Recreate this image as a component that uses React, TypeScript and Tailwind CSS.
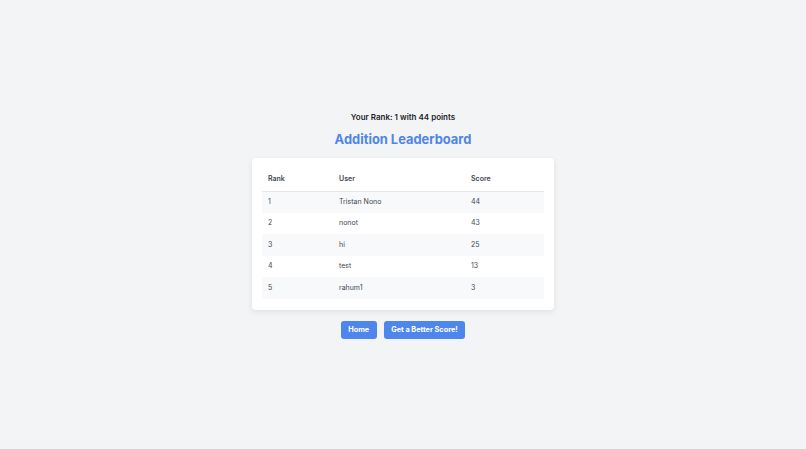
const rows = [
  { rank: 1, user: "Tristan Nono", score: 44 },
  { rank: 2, user: "nonot", score: 43 },
  { rank: 3, user: "hi", score: 25 },
  { rank: 4, user: "test", score: 13 },
  { rank: 5, user: "rahum1", score: 3 },
];

export default function App() {
  return (
    <div
      className="min-h-screen bg-[#f3f4f6] flex flex-col items-center justify-center pt-[1px]"
      style={{ fontFamily: "Inter, 'Noto Sans', sans-serif" }}
    >
      <p className="text-[8px] leading-[13px] font-semibold text-[#1f2328]">Your Rank: 1 with 44 points</p>
      <h1 className="mt-[7px] text-[12.9px] leading-[18px] font-bold text-[#4f86e4]">Addition Leaderboard</h1>

      {/* Leaderboard card */}
      <div className="mt-[9px] w-[302px] bg-white rounded-[4px] shadow-[0_2px_6px_rgba(0,0,0,0.08)] px-[10px] pt-[10px] pb-[11px]">
        <table className="w-full text-left text-[7px] text-[#3f4651] border-collapse">
          <thead>
            <tr className="border-b border-[#e5e7eb]">
              <th className="w-[71px] h-[23px] px-[6px] font-semibold">Rank</th>
              <th className="w-[132px] h-[23px] px-[6px] font-semibold">User</th>
              <th className="h-[23px] px-[6px] font-semibold">Score</th>
            </tr>
          </thead>
          <tbody>
            {rows.map((r, i) => (
              <tr key={r.rank} className={i % 2 === 0 ? "bg-[#f8f9fa]" : "bg-white"}>
                <td className="h-[21.6px] px-[6px]">{r.rank}</td>
                <td className="h-[21.6px] px-[6px]">{r.user}</td>
                <td className="h-[21.6px] px-[6px]">{r.score}</td>
              </tr>
            ))}
          </tbody>
        </table>
      </div>

      <div className="mt-[11px] flex gap-[7px]">
        <button className="h-[18px] px-[7.5px] rounded-[3px] bg-[#4f86ec] text-white text-[7.3px] font-bold">Home</button>
        <button className="h-[18px] px-[7.5px] rounded-[3px] bg-[#4f86ec] text-white text-[7.3px] font-bold">Get a Better Score!</button>
      </div>
    </div>
  );
}
